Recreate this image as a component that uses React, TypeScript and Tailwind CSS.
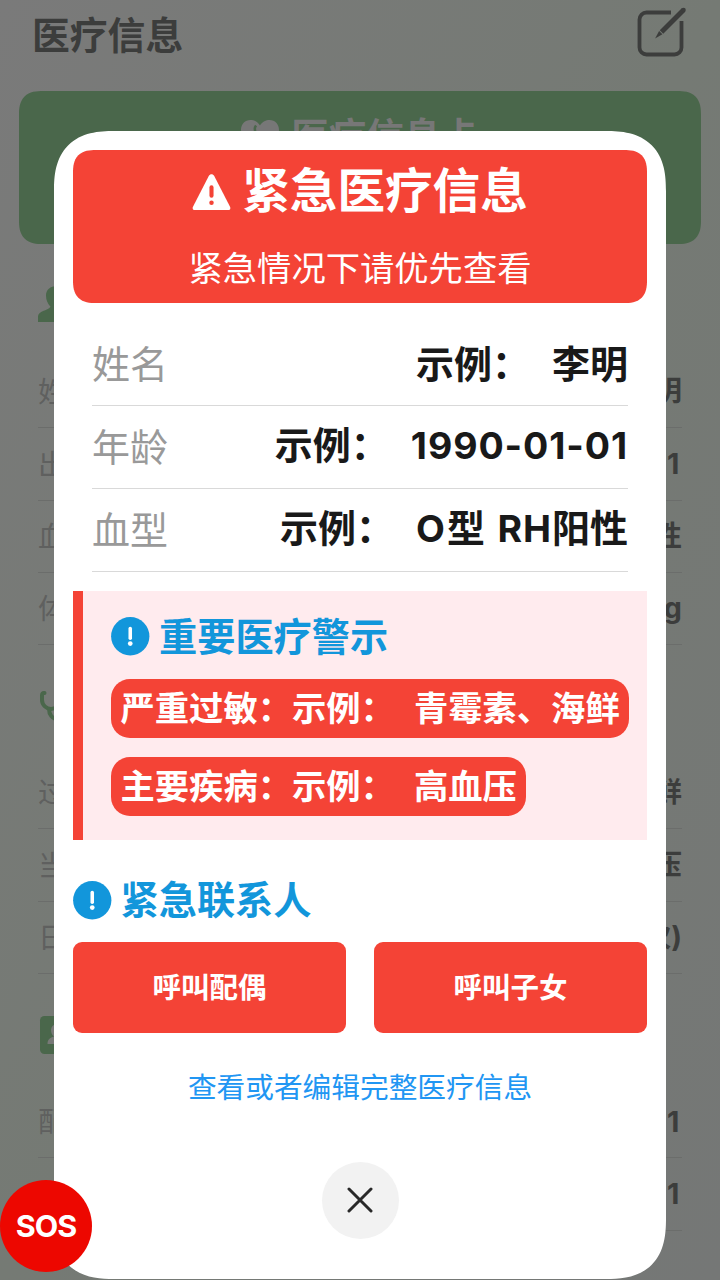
import type { ReactNode } from "react";

function PersonIcon() {
  return (
    <svg className="h-[38px] w-[38px]" viewBox="0 0 38 38" fill="#4a674b">
      <path d="M19 0c7 0 11 4 11 9.500 0 4.500-1.500 8-4.500 11.500C29 25 38 24.500 38 31v5H0v-5.500C0 25 9.500 25 12.500 20.800 9.500 17.500 8 14 8 9.500 8 4 12 0 19 0Z" />
    </svg>
  );
}

function StethoscopeIcon() {
  return (
    <svg className="h-[38px] w-[38px]" viewBox="0 0 38 38" fill="none" stroke="#4a674b" strokeWidth="4" strokeLinecap="round">
      <path d="M6.500 6H6C4.500 6 4 7 4 8.500V13c0 5 4.500 9 9 9s9-4 9-9V8.500C22 6.500 21.500 6 20 6" />
      <path d="M11 22c0 5 3 10.500 9.500 10.500S30.500 28 30.500 23v-3" />
      <circle cx="30.500" cy="15.500" r="3.500" />
    </svg>
  );
}

function ContactIcon() {
  return (
    <svg className="h-[38px] w-[38px]" viewBox="0 0 38 38">
      <rect x="2" width="34" height="38" rx="4.500" fill="#4a674b" />
      <path d="M19 8a6 6 0 0 1 6 6c0 3-1 5-3 6.500 4 1 6.500 3 6.500 7.500H9.500c0-4.500 2.500-6.500 6.500-7.500-2-1.500-3-3.500-3-6.500a6 6 0 0 1 6-6Z" fill="#777977" />
    </svg>
  );
}

function AlertCircle() {
  return (
    <svg className="h-[38.500px] w-[38.500px] shrink-0" viewBox="0 0 39 39">
      <circle cx="19.500" cy="19.500" r="19.400" fill="#1296db" />
      <path d="M19.500 11.700v9.900" stroke="#fff" strokeWidth="3.600" strokeLinecap="round" />
      <circle cx="19.500" cy="26.900" r="2.400" fill="#fff" />
    </svg>
  );
}

function BackSection({ icon, title, rows }: { icon: ReactNode; title: string; rows: [string, string][] }) {
  return (
    <section className="px-[38px]">
      <div className="flex h-[112px] items-center gap-2 pt-[10px] text-[34px] font-bold text-[#4a674b]">
        {icon}
        {title}
      </div>
      {rows.map(([label, value]) => (
        <div key={label} className="flex h-[72.300px] items-center justify-between border-b border-[#6b6d6b] pb-[2px] text-[28.700px]">
          <span className="text-[#5f605f]">{label}</span>
          <span
            className={
              /\d$/.test(value)
                ? "pt-[3px] font-['Inter',sans-serif] font-bold tracking-[2.500px] text-[#3c3d3c]"
                : "pt-[2px] font-['Inter','Noto_Sans_CJK_SC',sans-serif] font-bold text-[#3c3d3c]"
            }
          >
            {value}
          </span>
        </div>
      ))}
    </section>
  );
}

function InfoRow({ label, value }: { label: string; value: ReactNode }) {
  return (
    <div className="flex h-[83.100px] items-center justify-between border-b border-[#d9d9d9] pb-[4px] text-[38px]">
      <span className="text-[#999999]">{label}</span>
      <span className="flex items-baseline gap-[22px] whitespace-pre font-bold text-[#191919]">
        <span>示例：</span>
        <span>{value}</span>
      </span>
    </div>
  );
}

function Latin({ children }: { children: string }) {
  return <span className="font-['Inter',sans-serif] text-[37.500px] font-bold tracking-[0.900px]">{children}</span>;
}

function Pill({ label, value }: { label: string; value: string }) {
  return (
    <div className="flex h-[59px] w-fit items-center whitespace-pre rounded-[19px] bg-[#f44336] px-[9.500px] pb-[4px] text-[34.300px] font-bold text-white">
      <span>{label}示例：</span>
      <span className="pl-[19px]">{value}</span>
    </div>
  );
}

export default function App() {
  return (
    <div
      lang="zh-CN"
      className="relative h-[1280px] w-[720px] overflow-hidden bg-linear-to-br from-[#7a7a7a] via-[#757a74] to-[#757776] font-['Noto_Sans_CJK_SC',sans-serif] leading-none [text-spacing-trim:space-all]"
    >
      <header className="flex h-[91px] items-start justify-between pl-[32px] pr-[33px]">
        <h1 className="pt-[14px] text-[37.800px] font-bold text-[#3c3d3c]">医疗信息</h1>
        <svg className="mt-[6px] h-[52px] w-[52px]" viewBox="0 0 52 52" fill="none" stroke="#3c3d3c">
          <path d="M36 6.500H11.500a7 7 0 0 0-7 7v28a7 7 0 0 0 7 7h28a7 7 0 0 0 7-7V15" strokeWidth="3.800" />
          <path d="M48.500 4 26.500 26" strokeWidth="5" />
          <circle cx="48.500" cy="4" r="2.300" fill="#3c3d3c" stroke="none" />
          <path d="m24.100 25 3.300 3.300-7.300 4.200Z" fill="#3c3d3c" stroke="none" />
        </svg>
      </header>
      <div className="mx-[19px] flex h-[153px] justify-center rounded-[20px] bg-[#4a674b] pt-[24px] supports-[corner-shape:round]:rounded-[24px] [corner-shape:superellipse(1.4)]">
        <div className="flex h-[38px] items-center gap-[12px] text-[37.500px] font-bold text-[#777777]">
          <svg className="h-[38px] w-[38px]" viewBox="0 0 38 38">
            <path d="M19 10.500C16.500 6.500 13 5 9.500 5 4 5 0 9 0 15c0 9 10 16 19 21 9-5 19-12 19-21 0-6-4-10-9.500-10C25 5 21.500 6.500 19 10.500Z" fill="#777777" />
            <path d="M15 10.500c-1.500 2-1.500 5 0 8" stroke="#4a674b" strokeWidth="2.500" fill="none" />
          </svg>
          医疗信息卡
        </div>
      </div>
      <BackSection icon={<PersonIcon />} title="基本信息" rows={[["姓名", "李明"], ["出生日期", "1990-01-01"], ["血型", "O型 RH阳性"], ["体重", "65kg"]]} />
      <BackSection icon={<StethoscopeIcon />} title="医疗信息" rows={[["过敏史", "青霉素、海鲜"], ["当前疾病", "高血压"], ["日常用药", "(每日一次)"]]} />
      <BackSection icon={<ContactIcon />} title="联系人" rows={[["配偶", "11111111111"], ["子女", "11111111111"]]} />

      <main className="absolute left-[54px] top-[131px] flex h-[1148px] w-[612px] flex-col rounded-[48px] bg-white px-[19px] pt-[19px] supports-[corner-shape:round]:rounded-[60px] [corner-shape:superellipse(1.35)]">
        <div className="flex h-[153px] flex-col items-center rounded-[19px] bg-[#f44336] text-white supports-[corner-shape:round]:rounded-[23px] [corner-shape:superellipse(1.4)]">
          <div className="mt-[14px] flex h-[48px] items-center gap-[11px] text-[47.600px] font-bold">
            <svg className="mt-[7px] h-[38px] w-[39px]" viewBox="0 0 40 38">
              <path d="M17.200 2.500c1.400-2.300 4.200-2.300 5.600 0L39 34c1 2 0 3.500-2.200 3.500H3.200C1 37.500 0 36 1 34Z" fill="#fff" />
              <path d="M20 14.300v8.600" stroke="#f44336" strokeWidth="4.200" strokeLinecap="round" />
              <circle cx="20" cy="30" r="2.300" fill="#f44336" />
            </svg>
            紧急医疗信息
          </div>
          <p className="mt-[37px] text-[34.300px] leading-[34px]">紧急情况下请优先查看</p>
        </div>
        <div className="mt-[19.500px] px-[19px]">
          <InfoRow label="姓名" value="李明" />
          <InfoRow label="年龄" value={<Latin>1990-01-01</Latin>} />
          <InfoRow label="血型" value={<><Latin>O</Latin><span className="px-[1px] [word-spacing:3px]">型 </span><Latin>RH</Latin>阳性</>} />
        </div>
        <section className="mt-[19px] flex h-[249px] flex-col border-l-[10px] border-[#f44336] bg-[#ffebee] pl-[28px] pt-[26px]">
          <h2 className="mb-[23px] flex h-[39px] items-center gap-[9.500px] text-[38.200px] font-bold text-[#1296db]">
            <AlertCircle />
            <span className="pb-[2px]">重要医疗警示</span>
          </h2>
          <div className="flex flex-col gap-[19px]">
            <Pill label="严重过敏：" value="青霉素、海鲜" />
            <Pill label="主要疾病：" value="高血压" />
          </div>
        </section>
        <h2 className="mt-[41px] flex h-[39px] items-center gap-[9px] text-[38.200px] font-bold text-[#1296db]">
          <AlertCircle />
          <span className="pb-[4px]">紧急联系人</span>
        </h2>
        <div className="mt-[22px] grid h-[91px] shrink-0 grid-cols-2 gap-[28px] text-[28.500px] font-bold text-white">
          <button className="rounded-[9px] bg-[#f44336] pb-[3px]">呼叫配偶</button>
          <button className="rounded-[9px] bg-[#f44336] pb-[3px]">呼叫子女</button>
        </div>
        <a className="mt-[38px] text-center text-[28.700px] leading-[29px] text-[#2196f3]">查看或者编辑完整医疗信息</a>
        <button className="mx-auto mt-[62px] flex h-[77px] w-[77px] items-center justify-center rounded-full bg-[#f2f2f2]">
          <svg className="h-[26px] w-[26px]" viewBox="0 0 26 26" stroke="#292929" strokeWidth="3" strokeLinecap="round">
            <path d="m2 2 22 22M24 2 2 24" />
          </svg>
        </button>
      </main>

      <button className="absolute left-0 top-[1180px] flex h-[92px] w-[92px] items-center justify-center rounded-full bg-[#ed0700] font-['Inter',sans-serif] text-[30.500px] font-bold tracking-[-1px] text-white">
        SOS
      </button>
    </div>
  );
}
